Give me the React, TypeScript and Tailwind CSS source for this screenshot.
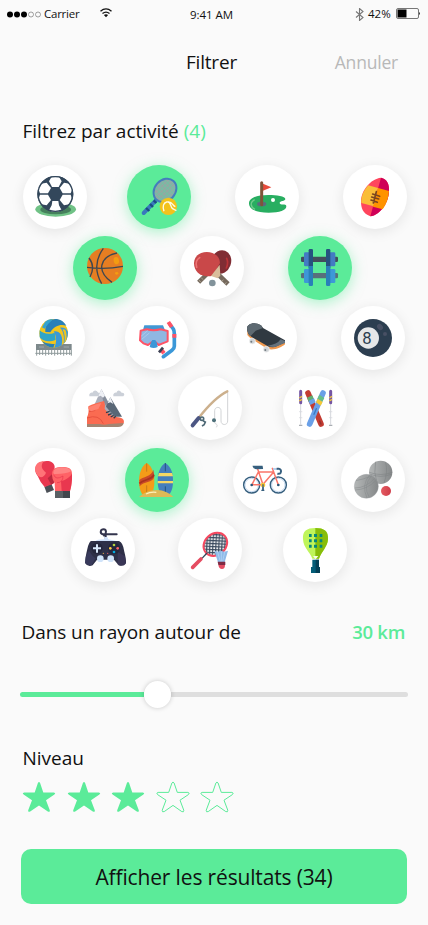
import type { ReactNode } from "react";

/* Every activity drawing uses a 192 x 192 canvas that fills its round button. */

const Soccer = () => (
  <>
    <ellipse cx="98" cy="133" rx="61" ry="22" fill="#70c286" />
    <ellipse cx="98" cy="134" rx="46" ry="14" fill="#46805c" />
    <circle cx="97" cy="87" r="54" fill="#33475b" />
    <g fill="#fff">
      <path d="M86 35h22l8 14-9 17H87l-9-17z" />
      <path d="M86 121l-8 15 10 4h18l10-4-8-15-2-13H88z" transform="translate(0 0)" />
      <path d="M71 53l13 16-9 16H51l-6-15 9-14z" />
      <path d="M123 53l-13 16 9 16h24l6-15-9-14z" />
      <path d="M51 89h24l9 16-13 16-16-3-9-14z" />
      <path d="M143 89h-24l-9 16 13 16 16-3 9-14z" />
    </g>
    <circle cx="97" cy="87" r="52" fill="none" stroke="#33475b" strokeWidth="4" />
  </>
);

const Tennis = () => (
  <>
    <path d="M50 144l36-37" stroke="#3979bd" strokeWidth="12" strokeLinecap="round" />
    <path d="M57 129l10 9M69 117l9 9M80 106l8 8" stroke="#194d82" strokeWidth="7" />
    <ellipse cx="114" cy="76" rx="38" ry="31" transform="rotate(-48 114 76)" fill="#91aaa3" />
    <path d="M94 60l38 38M103 51l39 38M113 45l34 34M87 70l36 37M82 82l27 27M94 96l48-46M87 89l45-45M101 105l47-47M108 109l37-37M86 75l28-28" stroke="#69c8a3" strokeWidth="2.5" />
    <ellipse cx="114" cy="76" rx="38" ry="31" transform="rotate(-48 114 76)" fill="none" stroke="#437dbd" strokeWidth="6" />
    <circle cx="124" cy="124" r="26" fill="#f3c21c" />
    <path d="M111 139c-5-14-2-26 8-28 12-2 11 10 15 17 3 6 12 5 14 9M123 111c15-1 12 10 22 14" fill="none" stroke="#fffbe6" strokeWidth="4" />
  </>
);

const Golf = () => (
  <>
    <path d="M42 115c0-16 24-25 58-25 25 0 51 4 51 12 0 7-17 5-17 12 0 9 20 0 20 10 0 12-20 19-53 19-39 0-59-10-59-28z" fill="#28ae61" />
    <path d="M59 104c-15 8-13 22 1 29" stroke="#73cc8d" strokeWidth="4" fill="none" />
    <ellipse cx="80" cy="117" rx="14" ry="7" fill="#5b6b7f" />
    <path d="M84 56l25 11-25 10z" fill="#e74c3c" />
    <path d="M80 53v66" stroke="#7f5439" strokeWidth="9" strokeLinecap="round" />
    <circle cx="114" cy="105" r="6" fill="#fff" />
  </>
);

const Rugby = () => (
  <>
    <path d="M114 38C82 42 55 76 54 109c0 20 5 37 28 45 30-4 55-41 56-77 1-20-5-34-24-39z" fill="#ff455d" />
    <path d="M114 38c19 5 25 19 24 39-1 36-26 73-56 77z" fill="#cf0057" />
    <path d="M76 61l29 8-13 55-37-10c-2-20 8-39 21-53z" fill="#fabd39" />
    <path d="M105 69l33 9c-1 19-7 38-19 55l-29-8z" fill="#ff9300" />
    <path d="M100 80l-9 34M89 87l21 7M86 96l21 6M84 105l19 7" stroke="#7a451f" strokeWidth="5" strokeLinecap="round" />
  </>
);

const Basketball = () => (
  <>
    <circle cx="96" cy="90" r="54" fill="#e67e22" />
    <ellipse cx="130" cy="74" rx="8" ry="11" fill="#f39c12" transform="rotate(-12 130 74)" />
    <ellipse cx="131" cy="112" rx="5" ry="4" fill="#f39c12" />
    <path d="M91 37Q54 88 86 143M42 94q53 8 108-3M48 66q20 26 3 57M132 51C78 63 70 106 117 139" stroke="#3e4851" strokeWidth="4" fill="none" />
  </>
);

const PingPong = () => (
  <>
    <path d="M56 139l28-28" stroke="#75695d" strokeWidth="13" />
    <ellipse cx="123" cy="78" rx="30" ry="36" fill="#802d34" transform="rotate(20 123 78)" />
    <path d="M140 67q6 14-1 29" stroke="#bb3338" strokeWidth="5" fill="none" strokeLinecap="round" />
    <path d="M115 116l29 28" stroke="#75695d" strokeWidth="14" />
    <path d="M42 82c0-46 77-44 78-1l-22 38c-31 8-56-9-56-37z" fill="#c94849" />
    <path d="M93 120l26-34 2 33-8 8z" fill="#d9bd9b" />
    <path d="M50 94c-4-13 1-24 9-29" stroke="#ed7374" strokeWidth="5" fill="none" strokeLinecap="round" />
    <circle cx="97" cy="141" r="10" fill="#82939b" />
    <path d="M57 132l5 6M64 125l5 6M130 131l-4 5M139 139l-4 5" stroke="#aaa08e" strokeWidth="3" />
  </>
);

const Dumbbells = () => (
  <>
    <rect x="39" y="62" width="111" height="16" rx="4" fill="#424e5c" />
    <rect x="39" y="111" width="111" height="16" rx="4" fill="#586f7b" />
    <g fill="#437cc3">
      <rect x="48" y="49" width="19" height="42" rx="4" />
      <rect x="123" y="49" width="19" height="42" rx="4" />
    </g>
    <g fill="#3d98d7">
      <rect x="48" y="99" width="19" height="42" rx="4" />
      <rect x="123" y="99" width="19" height="42" rx="4" />
    </g>
    <g fill="#25537f">
      <rect x="62" y="39" width="13" height="60" rx="4" />
      <rect x="114" y="39" width="13" height="60" rx="4" />
    </g>
    <path fill="#2980b9" d="M62 90h13v56q0 4-4 4h-5q-4 0-4-4zM114 90h13v56q0 4-4 4h-5q-4 0-4-4z" />
  </>
);

const Volleyball = () => (
  <>
    <rect x="45" y="114" width="107" height="18" fill="#7e898c" />
    <path d="M54 123h15M128 123h16" stroke="#a1aaad" strokeWidth="3" />
    <path d="M47 132v17M56 132v15M65 132v15M74 132v17M83 132v15M92 132v15M101 132v17M110 132v15M119 132v15M128 132v17M137 132v15M146 132v15M151 132v17M43 142h109" stroke="#909b9c" strokeWidth="3" />
    <circle cx="98" cy="82" r="43" fill="#f2c51d" />
    <path d="M64 56q16-17 38-17l-14 9q-15 12-16 30l-11-3z" fill="#f2c51d" />
    <path d="M73 78c-1-22 8-34 29-39 16 0 27 8 34 20-19-5-36 1-48 20z" fill="#2980b9" />
    <path d="M72 48q8-9 25-9l-15 14-11 15-8-4z" fill="#35a4d0" />
    <path d="M56 73c10 10 27 14 45 7l3 21c-16 8-37 7-48-7z" fill="#30a5c8" />
    <path d="M98 76c20-3 30 16 24 42-7 5-14 7-22 7 8-17 7-33-2-49z" fill="#3b98d8" />
    <path d="M117 65c12-1 20 3 24 13 0 16-5 28-13 36 2-20 1-37-11-49z" fill="#3b98d8" />
    <path d="M125 70q9 20 5 42l6-10q2-20-3-31z" fill="#f2c51d" />
    <path d="M63 106q15 10 38 8l-4 11q-21 0-34-19z" fill="#2980b9" />
  </>
);

const Snorkel = () => (
  <>
    <path d="M53 75l5-17h56l7 17z" fill="#4298d4" />
    <path d="M47 74l18-4q21 5 42 0l21 5v31l-15 6-12 5-9-8H80l-11 8-14-5-10-9z" fill="#90b7e2" stroke="#ff5366" strokeWidth="6" strokeLinejoin="round" />
    <path d="M77 111l5-9h9l5 9 2 12q-12 6-24 0z" fill="#3b98d8" />
    <path d="M48 91l20-17M51 99l22-18" stroke="#b6d1ef" strokeWidth="2" />
    <path d="M136 57l9 12q3 5 3 14v38q0 7-7 12l-26 19" fill="none" stroke="#3b98d8" strokeWidth="11" strokeLinejoin="round" strokeLinecap="round" />
    <path d="M130 48l10 15M148 84v11M110 133l7 9" stroke="#ff5366" strokeWidth="12" />
    <path d="M102 139l12-14" stroke="#3d4052" strokeWidth="8" />
  </>
);

const Skateboard = () => (
  <>
    <path d="M43 72v14c4 8 14 14 61 43 20 5 42-5 52-14v-9z" fill="#ef984e" />
    <g fill="#d0d4d7" stroke="#f2f2f2" strokeWidth="2">
      <circle cx="58" cy="105" r="9" />
      <circle cx="100" cy="130" r="9" />
    </g>
    <circle cx="55" cy="107" r="3" fill="#727b80" />
    <circle cx="97" cy="132" r="3" fill="#727b80" />
    <path d="M42 68c-1-15 23-23 42-10l6 8 66 37v6l-30 14q-14 2-24-4L56 93q-13-8-14-25z" fill="#303941" />
    <path d="M42 68c-1-15 23-23 42-10l6 8-22 8-16 17q-9-9-10-23z" fill="#5d6971" />
    <path d="M143 100l13 5v6l-30 12q-12 1-22-4 28-3 39-19z" fill="#64717c" />
  </>
);

const EightBall = () => (
  <>
    <circle cx="96" cy="96" r="57" fill="#2c3e50" />
    <circle cx="82" cy="96" r="32" fill="#e6e7e8" />
    <text x="78" y="114" textAnchor="middle" fontSize="50" fontFamily="Roboto, sans-serif" fill="#2c3e50">8</text>
    <ellipse cx="117" cy="63" rx="8" ry="10" transform="rotate(-42 117 63)" fill="#485064" />
    <circle cx="132" cy="84" r="6" fill="#485064" />
  </>
);

const Hiking = () => (
  <>
    <path d="M55 61v-6q4-7 9-5 8-13 18 0 7-1 6 6v5zM127 61v-6q4-7 9-5 6-13 16 0 8-1 8 6l-3 5z" fill="#cbd0d8" />
    <path d="M91 40l-27 60 74 26z" fill="#a9adb9" />
    <path d="M91 40l5 35 21 34 19 17z" fill="#858c9a" />
    <path d="M118 64l-13 28 28 30h20z" fill="#596776" />
    <path d="M91 40l-10 22 8-3 7 6 6-6zM118 64l-8 18 8-3 9 5z" fill="#eef0f5" />
    <path d="M52 91q18-9 47-16l3 12-1 11q14 22 35 25 24 1 23 16-2 8-10 10H48v-25q7-14 4-33z" fill="#fa6b51" />
    <path d="M54 107l17-3 11-17M48 126q36-13 49 17" fill="none" stroke="#e8523f" strokeWidth="3" />
    <path d="M61 91q15-8 30-10l-9 18-22 7-8-8v-5z" fill="#ff8270" />
    <path d="M48 144h38q15 4 27 0l45-3q-2 12-17 12H48z" fill="#a38572" />
    <path d="M105 110l11-4M111 117l11-4M119 123l9-5M128 127l6-6" stroke="#343b49" strokeWidth="4" />
  </>
);

const Fishing = () => (
  <>
    <path d="M149 48v87c0 14-20 14-20 0v-31c0-13-19-13-19 0v34c0 9 13 4 5 16" fill="none" stroke="#d2d4d6" strokeWidth="3" />
    <path d="M148 46Q109 65 61 127" fill="none" stroke="#ccb08d" strokeWidth="7" strokeLinecap="round" />
    <path d="M62 126l-18 22" stroke="#4c5683" strokeWidth="12" strokeLinecap="round" />
    <circle cx="72" cy="128" r="5" fill="none" stroke="#4d6875" strokeWidth="5" />
    <path d="M75 134l7 4-4 9M72 150l8-5" fill="none" stroke="#4d6875" strokeWidth="5" />
    <circle cx="108" cy="133" r="6" fill="#4d707a" />
  </>
);

const Skis = () => (
  <>
    <path d="M53 49v97M143 49v97" stroke="#d5d7dc" strokeWidth="3" />
    <path d="M48 107h10M48 125h10M138 107h10M138 125h10" stroke="#d5d6db" strokeWidth="2" />
    <path d="M48 148h10M138 148h10" stroke="#a9adb2" strokeWidth="4" />
    <path d="M53 46v34M143 46v34" stroke="#7556a3" strokeWidth="9" strokeLinecap="round" />
    <path d="M49 66l8-5M49 75l8-5M139 66l8-5M139 75l8-5" stroke="#f1c73b" strokeWidth="4" />
    <path d="M75 51l39 93" stroke="#c23b32" strokeWidth="17" strokeLinecap="round" />
    <path d="M72 65l16-7 6 14-16 7z" fill="#5fae73" />
    <path d="M76 75l17-8 5 12-16 8z" fill="#69a2e6" />
    <path d="M120 51l-40 93" stroke="#6aa0e8" strokeWidth="17" strokeLinecap="round" />
    <path d="M109 56l15 10-6 11-15-9z" fill="#67bf89" />
    <path d="M104 68l15 10-6 11-14-10z" fill="#f4c936" />
    <path d="M100 98l-7 17" stroke="#397bc5" strokeWidth="4" strokeLinecap="round" />
    <path d="M110 135l4 9" stroke="#91312f" strokeWidth="4" strokeLinecap="round" />
  </>
);

const Boxing = () => (
  <>
    <path d="M70 116l21-9 8 19-22 9z" fill="#4b5057" />
    <path d="M50 84c-14-19-7-40 14-43 20-5 35 1 37 15l-4 51-26 10q-14-15-21-33z" fill="#e9374f" />
    <path d="M44 73c-6-20 5-32 24-34-8 13-9 22 7 35-5 13-15 17-24 10z" fill="#ff7377" />
    <path d="M80 91l21-20-1 33-9 6z" fill="#ba293e" />
    <path d="M93 80c-1-18 12-23 31-23 18 0 29 4 29 20 0 22-1 39-6 52h-45l-1-23q-8-11-8-26z" fill="#ff6266" />
    <path d="M120 100q24-8 33-23v17q-2 22-6 35h-25z" fill="#e9374f" />
    <path d="M97 74q0-14 23-16 26 0 30 12-17 9-51 8z" fill="#ff8584" />
    <path d="M98 80q6 18 28 4 0 20-18 20" fill="none" stroke="#e9374f" strokeWidth="2" />
    <path d="M102 129h45v21h-45z" fill="#42474d" />
    <path d="M102 129h24v21h-24z" fill="#5a6064" />
  </>
);

const Surf = () => (
  <>
    <path d="M65 45c17 10 24 34 23 59-1 24-9 41-18 41H60c-13-5-18-25-18-49 1-24 9-42 23-51z" fill="#f49b18" />
    <path d="M43 96c9-10 38-10 42-31l3 21c-5 20-33 13-44 29z" fill="#ca4a27" />
    <path d="M43 106c15-14 37-9 44-26" fill="none" stroke="#a9331f" strokeWidth="5" />
    <path d="M65 46v25M65 112v26" stroke="#c67c1c" strokeWidth="3" />
    <path d="M121 45c17 10 24 31 23 56 0 26-10 43-23 43s-23-18-23-44c0-26 8-47 23-55z" fill="#447fbd" />
    <path d="M102 75h39l3 10H99zM98 99h46v7H98z" fill="#f4d864" />
    <path d="M121 45v25M121 115v24" stroke="#235682" strokeWidth="3" />
    <path d="M42 147q24-22 54-21 30 1 49 21z" fill="#ddb956" />
    <path d="M63 138q12-7 31-5" fill="none" stroke="#fff0b8" strokeWidth="4" />
  </>
);

const Bicycle = () => (
  <>
    <g fill="none" stroke="#365f7e" strokeWidth="4.5">
      <circle cx="56" cy="111" r="24" />
      <circle cx="136" cy="111" r="24" />
    </g>
    <g fill="none" stroke="#abc7e9" strokeWidth="2">
      <circle cx="56" cy="111" r="20" />
      <circle cx="136" cy="111" r="20" />
    </g>
    <path d="M56 110h33l33-38H76l-19 38M73 60l17 50M118 61l18 50" fill="none" stroke="#fa7569" strokeWidth="4.5" strokeLinejoin="round" strokeLinecap="round" />
    <path d="M61 55h26l1 6-17 1q-9-1-10-7zM90 112v15M85 127h9" fill="#365f7e" stroke="#365f7e" strokeWidth="4" />
    <path d="M120 63h14" stroke="#abc7e9" strokeWidth="5" />
    <path d="M131 62h6q10 3 6 12-3 5-10 3" fill="none" stroke="#365f7e" strokeWidth="6" />
    <circle cx="90" cy="111" r="7" fill="#f8c632" />
    <path d="M90 109v17" stroke="#365f7e" strokeWidth="4" />
    <circle cx="56" cy="111" r="4" fill="#285678" />
    <circle cx="136" cy="111" r="4" fill="#285678" />
  </>
);

const Petanque = () => (
  <>
    <defs>
      <linearGradient id="steel">
        <stop stopColor="#b4b7b7" />
        <stop offset="1" stopColor="#858889" />
      </linearGradient>
      <linearGradient id="jack">
        <stop stopColor="#e45b62" />
        <stop offset="1" stopColor="#cf3d49" />
      </linearGradient>
    </defs>
    <circle cx="119" cy="73" r="35" fill="url(#steel)" />
    <path d="M85 73q34 13 69 0M86 78q33 14 67 0M104 41q-7 32 4 64M134 43q7 31-5 62" fill="none" stroke="#7a7e80" strokeWidth="1.5" />
    <circle cx="76" cy="115" r="36" fill="url(#steel)" stroke="#9b9fa0" strokeWidth="1" />
    <path d="M41 120q34 0 60-29M42 126q36-1 63-29M86 81q-26 30-8 69M92 83q-28 31-7 65M45 98q22-4 47-14" fill="none" stroke="#85898b" strokeWidth="1.5" />
    <circle cx="135" cy="129" r="15" fill="url(#jack)" />
  </>
);

const Gamepad = () => (
  <>
    <path d="M104 61V49h33M104 49H95c-9-4-7-15 3-15 8 0 10 12 1 18" fill="none" stroke="#33344d" strokeWidth="6" strokeLinecap="round" />
    <path d="M100 57h9l3 7 24 5H74q2-5 26-5z" fill="#d1e2fb" />
    <path d="M61 69h83q12 4 16 32 6 23 5 35-7 11-22 6l-14-17H78l-13 17q-15 6-23-7 0-13 7-42 5-23 12-24z" fill="#2e3048" />
    <path d="M44 117l10-19q13 21 20 22l-12 21q-12 3-20-6z" fill="#3d4066" opacity=".65" />
    <path d="M140 101l22 14 3 22q-10 10-25 3z" fill="#443b63" opacity=".5" />
    <circle cx="78" cy="91" r="17" fill="#25273d" />
    <circle cx="129" cy="91" r="18" fill="#25273d" />
    <path d="M66 91h24M78 79v25" stroke="#d8e8fc" strokeWidth="6" />
    <circle cx="129" cy="81" r="4" fill="#b3d33e" />
    <circle cx="140" cy="91" r="4" fill="#ff6268" />
    <circle cx="129" cy="102" r="4" fill="#00a9df" />
    <circle cx="118" cy="91" r="4" fill="#ffcc43" />
    <circle cx="97" cy="106" r="2" fill="#eaaa49" />
    <circle cx="110" cy="106" r="2" fill="#e75262" />
    <circle cx="88" cy="122" r="10" fill="#d1e4fa" />
    <circle cx="119" cy="122" r="10" fill="#d1e4fa" />
  </>
);

const Badminton = () => (
  <>
    <defs>
      <pattern id="strings" width="9" height="9" patternUnits="userSpaceOnUse" patternTransform="rotate(45)">
        <path d="M0 0h9v9H0z" fill="#fff" />
        <path d="M0 2h9M2 0v9" stroke="#39495d" strokeWidth="3.6" />
      </pattern>
    </defs>
    <ellipse cx="112" cy="79" rx="38" ry="32" transform="rotate(-42 112 79)" fill="url(#strings)" stroke="#f5485f" strokeWidth="6" />
    <path d="M72 121l15-16" stroke="#34485a" strokeWidth="4" />
    <path d="M44 148l25-25" stroke="#e54c61" strokeWidth="11" strokeLinecap="round" />
    <path d="M109 98l10 3 10-3 10 3 11-3-10 35h-20z" fill="#90bbe8" />
    <path d="M119 102l8 29M130 101v30M140 102l-6 28" stroke="#adcff2" strokeWidth="3" />
    <path d="M119 131h23v10h-21z" fill="#802b43" />
    <path d="M121 141h20q0 12-9 12t-11-12z" fill="#e44c63" />
  </>
);

const Padel = () => (
  <>
    <path d="M60 64c-2-25 11-34 37-34s40 9 38 34c-1 22-20 38-27 58H88C81 102 62 91 60 64z" fill="#bff55b" />
    <path d="M97 30c26 0 40 9 38 34-1 22-20 38-27 58H97z" fill="#87bd0a" />
    <path d="M78 48h8v9h-8zM93 48h9v9h-9zM110 48h8v9h-8zM78 64h8v9h-8zM93 64h9v9h-9zM110 64h8v9h-8zM78 80h8v9h-8zM93 80h9v9h-9zM110 80h8v9h-8z" fill="#06887b" />
    <path d="M90 114h16l-8 10z" fill="#f6ffe8" />
    <path d="M88 125h20v22h3v18H84v-18h4z" fill="#045d78" />
    <path d="M98 125h10v22h3v18H98z" fill="#033f56" />
  </>
);

type Activity = { name: string; offset: string; art: ReactNode; active?: boolean };

const rows: { top: string; items: Activity[] }[] = [
  {
    top: "mt-0",
    items: [
      { name: "Football", offset: "ml-[23px]", art: <Soccer /> },
      { name: "Tennis", offset: "ml-10", art: <Tennis />, active: true },
      { name: "Golf", offset: "ml-11", art: <Golf /> },
      { name: "Rugby", offset: "ml-11", art: <Rugby /> },
    ],
  },
  {
    top: "mt-[7px]",
    items: [
      { name: "Basket", offset: "ml-[73px]", art: <Basketball />, active: true },
      { name: "Tennis de table", offset: "ml-[43px]", art: <PingPong /> },
      { name: "Musculation", offset: "ml-11", art: <Dumbbells />, active: true },
    ],
  },
  {
    top: "mt-1.5",
    items: [
      { name: "Volley", offset: "ml-[21px]", art: <Volleyball /> },
      { name: "Plongée", offset: "ml-10", art: <Snorkel /> },
      { name: "Skateboard", offset: "ml-11", art: <Skateboard /> },
      { name: "Billard", offset: "ml-11", art: <EightBall /> },
    ],
  },
  {
    top: "mt-1.5",
    items: [
      { name: "Randonnée", offset: "ml-[71px]", art: <Hiking /> },
      { name: "Pêche", offset: "ml-[43px]", art: <Fishing /> },
      { name: "Ski", offset: "ml-[41px]", art: <Skis /> },
    ],
  },
  {
    top: "mt-2",
    items: [
      { name: "Boxe", offset: "ml-[21px]", art: <Boxing /> },
      { name: "Surf", offset: "ml-10", art: <Surf />, active: true },
      { name: "Vélo", offset: "ml-11", art: <Bicycle /> },
      { name: "Pétanque", offset: "ml-11", art: <Petanque /> },
    ],
  },
  {
    top: "mt-1.5",
    items: [
      { name: "Jeux vidéo", offset: "ml-[71px]", art: <Gamepad /> },
      { name: "Badminton", offset: "ml-[43px]", art: <Badminton /> },
      { name: "Padel", offset: "ml-[41px]", art: <Padel /> },
    ],
  },
];

function ActivityButton({ activity }: { activity: Activity }) {
  const look = activity.active
    ? "bg-[#5beb99] shadow-[0_3px_14px_rgba(91,235,153,0.5)]"
    : "bg-white shadow-[0_3px_14px_rgba(0,0,0,0.09)]";
  return (
    <button className={`size-16 shrink-0 rounded-full ${activity.offset} ${look}`}>
      <svg viewBox="0 0 192 192" className="size-16" fill="none">
        {activity.art}
      </svg>
    </button>
  );
}

function Star({ filled }: { filled: boolean }) {
  return (
    <svg viewBox="0 0 34 32" className="h-8 w-[34px]">
      <path
        d="M15.9 2Q17 0 18.1 2L21.3 11.4 31.9 11.4Q34.2 11.9 32.4 13.6L24 19.2 27.8 29.3Q28 31.5 25.8 30.6L17 24.4 8.2 30.6Q6 31.5 6.2 29.3L10 19.2 1.6 13.6Q-.2 11.9 2.1 11.4L12.7 11.4Z"
        fill={filled ? "#5beb99" : "none"}
        stroke="#5beb99"
        strokeWidth={filled ? 0 : 1}
        strokeLinejoin="round"
      />
    </svg>
  );
}

function StatusBar() {
  return (
    <div className="flex h-7 items-center pl-[7px] pr-[7px] text-[11.5px] tracking-[-0.25px]">
      <div className="flex w-[183px] items-center">
        <svg viewBox="0 0 35 7" className="h-[7px] w-[35px]">
          <circle cx="3" cy="3.5" r="3" />
          <circle cx="10" cy="3.5" r="3" />
          <circle cx="17" cy="3.5" r="3" />
          <circle cx="24" cy="3.5" r="2.5" fill="none" stroke="#777" strokeWidth=".7" />
          <circle cx="31" cy="3.5" r="2.5" fill="none" stroke="#777" strokeWidth=".7" />
        </svg>
        <span className="ml-0.5 w-[55px]">Carrier</span>
        <svg viewBox="0 0 14 11" className="mb-1 h-[11px] w-[14px]" fill="none" stroke="#111">
          <path d="M1.5 4.2q5.5-4.6 11 0M3.5 6.5q3.5-2.8 7 0" strokeWidth="1.4" />
          <path d="M4.9 8q2.1-1.5 4.2 0L7 10.3z" fill="#111" stroke="none" />
        </svg>
      </div>
      <span className="mt-0.5 w-[165px] tracking-[-0.05px]">9:41 AM</span>
      <svg viewBox="0 0 9 13" className="h-[13px] w-[9px]" fill="none" stroke="#777" strokeWidth="1.1">
        <path d="M1 3.5l7 6-3.5 3v-12L8 3.5l-7 6" />
      </svg>
      <span className="ml-1 w-7 tracking-[0px]">42%</span>
      <svg viewBox="0 0 25 11" className="mb-px h-[11px] w-[25px]">
        <rect x=".5" y=".5" width="22" height="10" rx="1.5" fill="none" stroke="#777" />
        <path d="M1.5 1.5h9v8h-9z" />
        <path d="M23 4q2 1.5 0 3z" fill="#333" />
      </svg>
    </div>
  );
}

export default function App() {
  return (
    <main className="flex h-[925px] w-[428px] flex-col overflow-hidden bg-[#fafafa] font-['Open_Sans','Noto_Sans',sans-serif] text-[#111]">
      <StatusBar />

      <header className="mt-5 flex h-7 items-center pl-[186px] pr-[30px]">
        <h1 className="text-[19px] leading-7 tracking-[-0.2px]">Filtrer</h1>
        <button className="ml-auto text-[17.5px] leading-7 tracking-[-0.2px] text-[#b8b8b8]">Annuler</button>
      </header>

      <h2 className="mt-[41px] h-7 pl-[22.5px] text-[19px] leading-7">
        Filtrez par activité <span className="text-[#5beb99]">(4)</span>
      </h2>

      <section className="mt-5 flex flex-col">
        {rows.map((row, index) => (
          <div key={index} className={`flex ${row.top}`}>
            {row.items.map((activity) => (
              <ActivityButton key={activity.name} activity={activity} />
            ))}
          </div>
        ))}
      </section>

      <div className="mt-9 flex h-7 items-center justify-between pl-[21.5px] pr-[23px] text-[19px] leading-7">
        <h2 className="tracking-[-0.08px]">Dans un rayon autour de</h2>
        <span className="text-[18.5px] font-semibold tracking-[-0.3px] text-[#5beb99]">30 km</span>
      </div>

      <div className="ml-5 mt-[34px] flex h-7 w-[388px] items-center">
        <div className="h-[5px] w-[124px] rounded-l-full bg-[#5beb99]" />
        <div className="z-10 size-[27px] shrink-0 rounded-full bg-white shadow-[0_0_5px_rgba(0,0,0,0.2)]" />
        <div className="h-[5px] flex-1 rounded-r-full bg-[#dedede]" />
      </div>

      <h2 className="mt-9 h-7 pl-[22.5px] text-[19px] leading-7">Niveau</h2>
      <div className="mt-[9px] flex gap-[10.5px] pl-[22px]">
        {[1, 2, 3, 4, 5].map((value) => (
          <Star key={value} filled={value <= 3} />
        ))}
      </div>

      <button className="mx-[21px] mt-9 h-[55px] rounded-[10px] bg-[#5beb99] text-[21px] leading-7 tracking-[-0.15px]">
        Afficher les résultats (34)
      </button>
    </main>
  );
}
